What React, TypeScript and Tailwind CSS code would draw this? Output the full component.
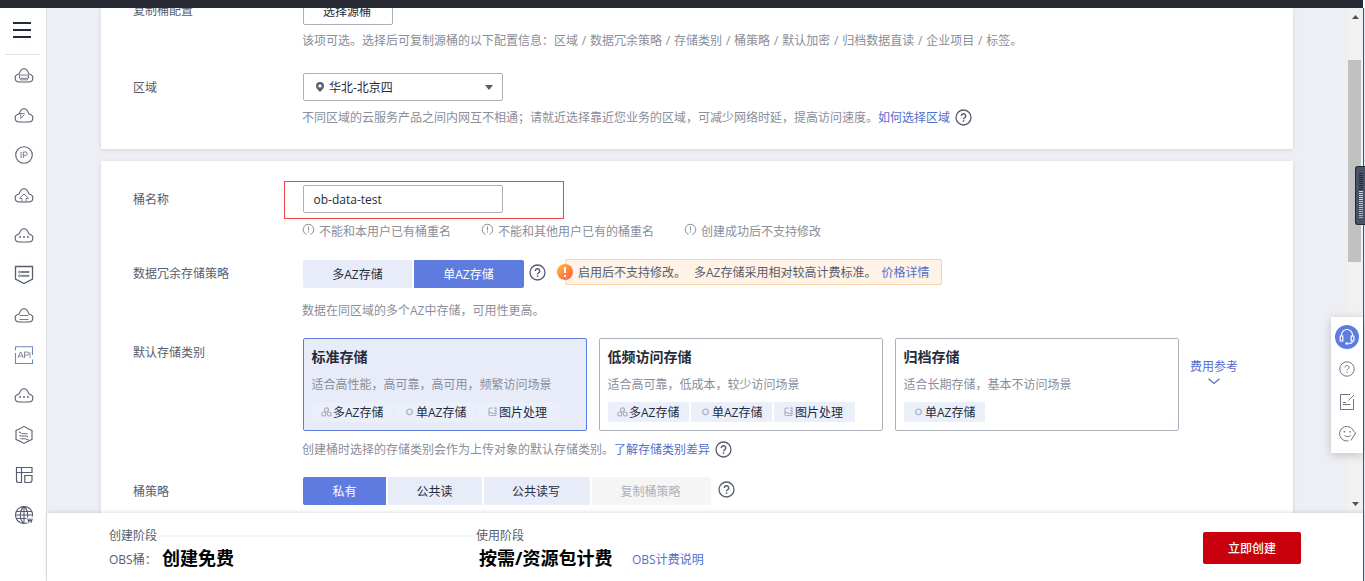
import type { ReactNode } from 'react';

const CLOUD = 'M6.500 17a3.900 3.900 0 0 1-.8-7.700c.6-.1 1-.5 1.300-1.100C7.800 5.500 9.300 3.800 11.500 3.800s3.700 1.700 4.500 4.400c.3.600.7 1 1.300 1.100a3.900 3.900 0 0 1-.8 7.700z';

//iconos del menu lateral, en el orden en que aparecen
const menu: ReactNode[] = [
    <><path d={CLOUD} /><path strokeWidth=".8" d="M7 10h9v3.300H7zM7.500 14.800h8M14.300 11.700h.8" /></>,
    <><path d={CLOUD} /><path strokeWidth=".8" d="M6.500 8.500h5.500M8.300 8.500v5l3.700-4" /></>,
    <><circle cx="11.500" cy="10" r="8.300" /><path strokeWidth=".8" d="M8.500 7v6M10.800 13V7h2.200a1.700 1.700 0 0 1 0 3.400h-2.200" /></>,
    <><path d={CLOUD} /><path strokeWidth=".8" d="M9.500 17v-3.700H7L11.500 9l4.500 4.300h-2.500V17" /></>,
    <><path d={CLOUD} /><path strokeWidth="1.600" d="M6.700 12h1.800M10.600 12h1.800M14.500 12h1.800" /></>,
    <><path strokeWidth="1.300" d="M3 1.500h17v12.500L11.500 18.500 3 14z" /><circle cx="7" cy="7" r="1" strokeWidth=".8" /><circle cx="7" cy="10.800" r="1" strokeWidth=".8" /><path strokeWidth=".8" d="M8.500 6.500h8v1h-8M8.500 10.300h8v1h-8" /></>,
    <><path d={CLOUD} /><path strokeWidth=".8" d="M7 10.500h9M7 14.500h9" /></>,
    <><path stroke="#6e8bb5" d="M3 5.500V1.800h17V10M20 14.500v4H3V8" /><path strokeWidth=".7" d="M5.500 13l2.400-6h.6l2.200 6M6.300 11h3.500M12 13V7h2.500a1.500 1.500 0 0 1 0 3.200H12M17.500 7v6" /></>,
    <><path d={CLOUD} /><path strokeWidth="1.600" d="M6.700 12h1.800M10.600 12h1.800M14.500 12h1.800" /></>,
    <><path d="M11.500 1.400c2.500 1.700 5 3 8 4v9c-3 1-5.500 2.300-8 4-2.500-1.700-5-3-8-4v-9c3-1 5.500-2.300 8-4z" /><path strokeWidth=".9" d="M7 6.500v1.200h1.500l1 1h5.500M8 11h7v1.300M7 10.500l1.500.5M8 13.800h5.500l1 .8h1.500" /></>,
    <><path strokeWidth="1.200" d="M4 2.500h15.500v5H4zM4 7.500v8c0 1.300.8 2 2 2h3v-15M12.300 10.500h7.200v4.500c0 1.600-1 2.500-2.500 2.500h-4.700z" /></>,
    <><path d="M15 17.700a8.500 8.500 0 1 1 4.900-6.200M3.900 6.500h15.200M3.900 13.500H14M11.500 1.500v17M3 10h17M11.500 1.500c-5 4-5 13 0 17M11.500 1.500c3.200 2.700 4.300 7 3.500 11" /><path strokeWidth="1.100" d="M15.200 13.500l1.100 3.500 1.200-2.800 1.200 2.800 1.100-3.500" /></>,
];

function Help({ className }: { className?: string }) {
    return (
        <svg className={`shrink-0 ${className ?? ''}`} width="17" height="17" viewBox="0 0 17 17" fill="none" stroke="#575d6c" strokeWidth="1.3">
            <circle cx="8.500" cy="8.500" r="7.500" />
            <path strokeWidth="1.500" d="M6.300 7a2.200 2.200 0 1 1 3.300 1.900c-.8.4-1.100.8-1.100 1.400M8.500 11.300v1.400" />
        </svg>
    );
}

function Hint({ children, className }: { children: ReactNode; className?: string }) {
    return (
        <div className={`flex items-start ${className ?? ''}`}>
            <svg className="mr-1" width="13" height="13" viewBox="0 0 13 13" fill="none" stroke="#8a8e99">
                <path d="M4.600 11.500a5.300 5.300 0 1 1 3.800 0M6.500 3.500v3.800M6.500 8.300v1.300" />
            </svg>
            {children}
        </div>
    );
}

function Row({ label, className, labelClass, children }: { label: string; className: string; labelClass: string; children: ReactNode }) {
    return (
        <div className={`flex items-start ${className}`}>
            <div className={`w-[170px] shrink-0 text-[#575d6c] ${labelClass}`}>{label}</div>
            <div className="min-w-0">{children}</div>
        </div>
    );
}

const tagIcons: Record<string, ReactNode> = {
    '多AZ存储': <><circle cx="5.500" cy="2.800" r="2" /><circle cx="2.700" cy="7" r="2" /><circle cx="8.300" cy="7" r="2" /></>,
    '单AZ存储': <circle cx="5.500" cy="4.800" r="2.800" />,
    '图片处理': <><path d="M6 1H3.300A1.300 1.300 0 0 0 2 2.300v4.900a1.300 1.300 0 0 0 1.300 1.300h4.400A1.300 1.300 0 0 0 9 7.200V4M2 5.500h2.500l1 1H9" /><path d="M7 1h2v2L7 4" /></>,
};

const clases = [
    { nombre: '标准存储', texto: '适合高性能，高可靠，高可用，频繁访问场景', tags: ['多AZ存储', '单AZ存储', '图片处理'], activa: true },
    { nombre: '低频访问存储', texto: '适合高可靠，低成本，较少访问场景', tags: ['多AZ存储', '单AZ存储', '图片处理'], activa: false },
    { nombre: '归档存储', texto: '适合长期存储，基本不访问场景', tags: ['单AZ存储'], activa: false },
];

function Sidebar() {
    return (
        <aside className="w-[47px] shrink-0 border-r border-[#dfe1e6] bg-white">
            <div className="ml-[13px] mt-[14px] flex w-[18px] flex-col gap-[5px]">
                <div className="h-[2px] bg-[#252b3a]"></div>
                <div className="h-[2px] bg-[#252b3a]"></div>
                <div className="h-[2px] bg-[#252b3a]"></div>
            </div>
            <div className="ml-[5px] mt-4 h-px w-[35px] bg-[#dfe1e6]"></div>
            <nav>
                {menu.map((icono, i) => (
                    <div key={i} className="flex h-10 items-center pl-3">
                        <svg width="24" height="20" viewBox="-0.500 0 24 20" fill="none" stroke="#575d6c" strokeWidth="1.1">{icono}</svg>
                    </div>
                ))}
            </nav>
        </aside>
    );
}

function Floating() {
    return (
        <div className="absolute left-[1331px] top-[317px] flex h-[136px] w-8 flex-col items-center bg-white pt-2 shadow-[0_2px_10px_rgba(0,0,0,0.2)]">
            <div className="flex h-6 w-6 items-center justify-center rounded-full bg-[#5e7ce0]">
                <svg width="18" height="18" viewBox="0 0 18 18" fill="none" stroke="#fff" strokeWidth="1.200">
                    <path d="M3.500 8V7a5.500 5.500 0 0 1 11 0v1M2.200 8h2.600v5H2.200zM13.200 8h2.600v5h-2.600zM14.500 13c0 1.500-1.500 2.500-3.500 2.500" />
                    <path strokeWidth="2" d="M7.500 15.500h3" />
                </svg>
            </div>
            <svg className="mt-3" width="16" height="16" viewBox="0 0 16 16" fill="none" stroke="#71757f">
                <circle cx="8" cy="8" r="7.200" /><path d="M6 6.500a2 2 0 1 1 3 1.700c-.7.400-1 .700-1 1.400M8 10.800v1.200" />
            </svg>
            <svg className="mt-4" width="16" height="18" viewBox="0 0 16 18" fill="none" stroke="#71757f">
                <path d="M11 1.500H1.500v15h13V6M15 2l-5.500 5.500M4 9.500h3M4 11.500h7.500" />
            </svg>
            <svg className="mt-[14px]" width="17" height="17" viewBox="0 0 17 17" fill="none" stroke="#71757f">
                <path d="M9.500 15.800a7.300 7.300 0 1 1 5.300-9.300M15 6.500l1.500 1.500-4.500 7.500M5.500 10.500c1.500 1.500 4.500 1.500 6 0" />
                <path strokeWidth="1.500" d="M4.700 6.800h1.500M10.300 6.800h1.500" />
            </svg>
        </div>
    );
}

function Meter() {
    return (
        <div className="absolute left-[1355px] top-[166px] flex h-[59px] w-[10px] flex-col gap-px rounded-l-[3px] border border-r-0 border-[#252833] bg-[#4b5265] pl-[3px] pt-[6px]">
            {Array.from({ length: 23 }, (_, i) => (
                <div key={i} className={`h-px w-1 shrink-0 ${i < 9 ? 'bg-[#272b37]' : i < 14 ? 'bg-[#dfe06e]' : i < 18 ? 'bg-[#a3dc91]' : 'bg-[#63d9c6]'}`}></div>
            ))}
        </div>
    );
}

export default function App() {
    return (
        <div className="relative flex h-[581px] w-[1365px] flex-col overflow-hidden bg-white font-['Open_Sans','Noto_Sans_CJK_SC',sans-serif] text-xs leading-[18px] text-[#8a8e99]">
            <div className="h-2 w-[1363px] shrink-0 bg-[#282b33]"></div>
            <div className="flex min-h-0 flex-1">
                <Sidebar />
                <div className="flex min-w-0 flex-1 flex-col">
                    <div className="flex h-[505px] shrink-0">
                        <main className="flex-1 overflow-hidden bg-[#eeeff5] pl-[54px] pr-[54px]">
                            <section className="h-[141px] overflow-hidden bg-white pl-8 shadow-[0_1px_4px_rgba(0,0,0,0.12)]">
                                <Row label="复制桶配置" className="-mt-[11px]" labelClass="mt-[5px]">
                                    <button className="block h-7 w-[90px] rounded-[2px] border border-[#adb0b8] pr-[2px] pt-[2px] text-[#252b3a]">选择源桶</button>
                                    <p className="-ml-px mt-[7px] whitespace-nowrap [word-spacing:0.700px]">该项可选。选择后可复制源桶的以下配置信息：区域 / 数据冗余策略 / 存储类别 / 桶策略 / 默认加密 / 归档数据直读 / 企业项目 / 标签。</p>
                                </Row>
                                <Row label="区域" className="mt-[23px]" labelClass="mt-[6px]">
                                    <div className="flex h-7 w-[200px] items-center rounded-[2px] border border-[#adb0b8] pl-3 pr-[9px] text-[#252b3a]">
                                        <svg className="mr-[5px]" width="8" height="10" viewBox="0 0 8 10" fill="#575d6c"><path fillRule="evenodd" d="M4 0a4 4 0 0 1 4 4c0 2-2 4-4 6-2-2-4-4-4-6a4 4 0 0 1 4-4zm0 2.200a1.700 1.700 0 1 0 0 3.400 1.700 1.700 0 0 0 0-3.400z" /></svg>
                                        <span className="flex-1 pt-[2px]">华北-北京四</span>
                                        <svg width="8" height="5" viewBox="0 0 8 5" fill="#575d6c"><path d="M0 0h8L4 5z" /></svg>
                                    </div>
                                    <div className="-ml-px mt-[6px] flex items-center whitespace-nowrap">
                                        <span className="pt-[2px]">不同区域的云服务产品之间内网互不相通；请就近选择靠近您业务的区域，可减少网络时延，提高访问速度。</span>
                                        <a className="pt-[2px] text-[#526ecc]">如何选择区域</a>
                                        <Help className="ml-[5px]" />
                                    </div>
                                </Row>
                            </section>
                            <section className="mt-3 h-[400px] bg-white pl-8 pt-6 shadow-[0_1px_4px_rgba(0,0,0,0.12)]">
                                <Row label="桶名称" className="" labelClass="mt-[6px]">
                                    <div className="relative">
                                        <div className="flex h-7 w-[200px] items-center rounded-[2px] border border-[#adb0b8] pl-[9.5px] pt-px text-[#252b3a]">ob-data-test</div>
                                        <div className="absolute -left-[19px] -top-1 h-[38px] w-[280px] border border-[#f04545]"></div>
                                    </div>
                                    <div className="-ml-px mt-[10px] flex">
                                        <Hint>不能和本用户已有桶重名</Hint>
                                        <Hint className="ml-[30px]">不能和其他用户已有的桶重名</Hint>
                                        <Hint className="ml-[30px]">创建成功后不支持修改</Hint>
                                    </div>
                                </Row>
                                <Row label="数据冗余存储策略" className="mt-[19px]" labelClass="mt-[5px]">
                                    <div className="flex items-start">
                                        <button className="h-7 w-[109px] rounded-l-[2px] bg-[#e8ecf9] pt-[2px] text-[#252b3a]">多AZ存储</button>
                                        <button className="ml-[2px] h-7 w-[110px] rounded-r-[2px] bg-[#5e7ce0] pr-px pt-[2px] text-white">单AZ存储</button>
                                        <Help className="ml-[5px] mt-1" />
                                        <div className="relative -mt-px ml-[19px] flex h-[26px] w-[377px] items-center whitespace-nowrap rounded-[2px] border border-[#ffcfa3] bg-[#fff2e6] pl-3 pt-[2px] text-[#575d6c]">
                                            <svg className="absolute -left-[9px] top-1" width="16" height="16" viewBox="0 0 16 16">
                                                <defs><linearGradient id="aviso" x1="0" y1="0" x2="1" y2="1"><stop offset="0" stopColor="#ffb83d" /><stop offset="1" stopColor="#ff5c42" /></linearGradient></defs>
                                                <circle cx="8" cy="8" r="8" fill="url(#aviso)" />
                                                <path d="M8 3v6M8 11v2" stroke="#fff" strokeWidth="2" />
                                            </svg>
                                            <span>启用后不支持修改。</span>
                                            <span className="ml-2">多AZ存储采用相对较高计费标准。</span>
                                            <a className="ml-[5px] text-[#526ecc]">价格详情</a>
                                        </div>
                                    </div>
                                    <p className="-ml-px mt-[14px]">数据在同区域的多个AZ中存储，可用性更高。</p>
                                </Row>
                                <Row label="默认存储类别" className="mt-[18px]" labelClass="mt-[6px]">
                                    <div className="flex">
                                        {clases.map((clase) => (
                                            <div key={clase.nombre} className={`mr-3 h-[93px] w-[284px] shrink-0 rounded-[2px] border pl-[7.5px] pt-[9px] ${clase.activa ? 'border-[#5e7ce0] bg-[#e8ecf9]' : 'border-[#adb0b8] bg-white'}`}>
                                                <h2 className="text-sm font-bold leading-[18px] text-[#252b3a]">{clase.nombre}</h2>
                                                <p className="mt-[10px]">{clase.texto}</p>
                                                <div className="ml-[0.5px] mt-2 flex gap-[2px]">
                                                    {clase.tags.map((tag) => (
                                                        <div key={tag} className="flex h-5 w-[81px] items-center bg-[#ebeffa] pl-[9px] text-[#252b3a]">
                                                            <svg className="mr-px" width="11" height="10" viewBox="0 0 11 10" fill="none" stroke="#adb0b8" strokeWidth="1.200">{tagIcons[tag]}</svg>
                                                            <span className="pt-[2px]">{tag}</span>
                                                        </div>
                                                    ))}
                                                </div>
                                            </div>
                                        ))}
                                        <a className="-ml-px flex w-12 flex-col items-center pt-5 text-[#526ecc]">
                                            费用参考
                                            <svg className="mt-[2px]" width="12" height="7" viewBox="0 0 12 7" fill="none" stroke="#526ecc" strokeWidth="1.200"><path d="M.5.700 6 5.500 11.500.700" /></svg>
                                        </a>
                                    </div>
                                    <div className="-ml-px mt-2 flex items-center">
                                        <span className="pt-[2px]">创建桶时选择的存储类别会作为上传对象的默认存储类别。</span>
                                        <a className="pt-[2px] text-[#526ecc]">了解存储类别差异</a>
                                        <Help className="ml-[5px]" />
                                    </div>
                                </Row>
                                <Row label="桶策略" className="mt-[18px]" labelClass="mt-[6px]">
                                    <div className="flex items-start gap-[2px]">
                                        <button className="h-7 w-[83px] rounded-l-[2px] bg-[#5e7ce0] pt-[2px] text-white">私有</button>
                                        <button className="h-7 w-[94px] bg-[#e8ecf9] pr-px pt-[2px] text-[#252b3a]">公共读</button>
                                        <button className="h-7 w-[106px] bg-[#e8ecf9] pr-[2px] pt-[2px] text-[#252b3a]">公共读写</button>
                                        <button className="h-7 w-[119px] rounded-r-[2px] bg-[#f5f5f6] pr-[2px] pt-[2px] text-[#adb0b8]">复制桶策略</button>
                                        <Help className="ml-[5px] mt-1" />
                                    </div>
                                </Row>
                            </section>
                        </main>
                        <div className="flex w-4 flex-col items-center bg-[#f1f1f1]">
                            <svg className="mt-[7px] shrink-0" width="7" height="4" viewBox="0 0 7 4" fill="#505050"><path d="M0 4h7L3.500 0z" /></svg>
                            <div className="mr-px mt-[41px] h-[202px] w-[13px] bg-[#c1c1c1]"></div>
                            <svg className="mb-[7px] mt-auto shrink-0" width="7" height="4" viewBox="0 0 7 4" fill="#505050"><path d="M0 0h7L3.500 4z" /></svg>
                        </div>
                    </div>
                    <footer className="relative flex flex-1 items-start bg-white pl-[62px] pr-[62px] text-[#575d6c] shadow-[0_-1px_4px_rgba(0,0,0,0.12)]">
                        <div className="w-[367px] pt-[14px]">
                            <div className="flex items-center gap-[3px]">
                                创建阶段
                                <div className="h-[2px] w-[313px] bg-[#f5f5f6]"></div>
                            </div>
                            <div className="mt-px flex items-center">
                                <span className="w-[53px] pt-1">OBS桶：</span>
                                <strong className="text-lg leading-6 text-black">创建免费</strong>
                            </div>
                        </div>
                        <div className="flex-1 pt-[14px]">
                            <div>使用阶段</div>
                            <div className="mt-px flex items-center">
                                <strong className="ml-[3px] w-[153px] text-lg leading-6 text-black">按需/资源包计费</strong>
                                <a className="pt-1 text-[#526ecc]">OBS计费说明</a>
                            </div>
                        </div>
                        <button className="mt-[19px] h-8 w-[98px] rounded-[2px] bg-[#c7000b] pt-[2px] font-medium text-white">立即创建</button>
                    </footer>
                </div>
                <div className="w-[2px] shrink-0 border-l border-[#47566b] bg-[#dbe8f5]"></div>
            </div>
            <Floating />
            <Meter />
        </div>
    );
}
